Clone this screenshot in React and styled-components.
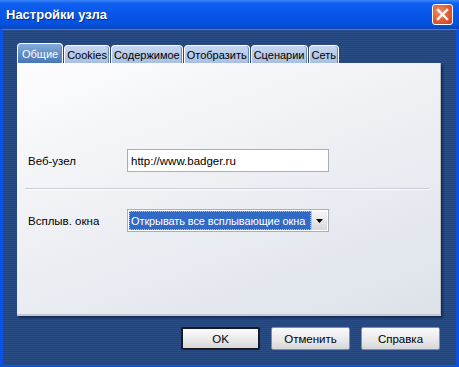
import React from "react";
import styled, { createGlobalStyle } from "styled-components";

const GlobalStyle = createGlobalStyle`
  html, body {
    margin: 0;
    padding: 0;
    background: #25467c;
  }
  * {
    box-sizing: border-box;
  }
`;

const tabs = ["Общие", "Cookies", "Содержимое", "Отобразить", "Сценарии", "Сеть"];

const App = () => {
  return (
    <>
      <GlobalStyle />
      <Window>
        <TitleBar>
          <Title>Настройки узла</Title>
          <CloseButton aria-label="close">
            <svg width="13" height="13" viewBox="0 0 13 13">
              <path d="M2 2 L11 11 M11 2 L2 11" stroke="#fff" strokeWidth="2.4" strokeLinecap="square" />
            </svg>
          </CloseButton>
        </TitleBar>
        <Body>
          <TabStrip>
            {tabs.map((t, i) => (
              <Tab key={t} $active={i === 0}>
                {t}
              </Tab>
            ))}
          </TabStrip>
          <Panel>
            <FieldRow>
              <Label>Веб-узел</Label>
              <TextInput>http://www.badger.ru</TextInput>
            </FieldRow>
            <Separator />
            <FieldRow>
              <Label>Всплыв. окна</Label>
              <Select>
                <SelectValue>Открывать все всплывающие окна</SelectValue>
                <SelectArrow>
                  <svg width="7" height="4" viewBox="0 0 7 4">
                    <path d="M0 0 H7 L3.5 4 Z" fill="#000" />
                  </svg>
                </SelectArrow>
              </Select>
            </FieldRow>
          </Panel>
          <ButtonRow>
            <Button $default>OK</Button>
            <Button>Отменить</Button>
            <Button>Справка</Button>
          </ButtonRow>
        </Body>
      </Window>
    </>
  );
};

const Window = styled.div`
  width: 459px;
  height: 367px;
  display: flex;
  flex-direction: column;
  font-family: "Liberation Sans", Arial, sans-serif;
  font-size: 11px;
  color: #000;
`;

const TitleBar = styled.div`
  height: 29px;
  flex: none;
  display: flex;
  align-items: center;
  justify-content: space-between;
  padding: 0 6px 0 6px;
  background: linear-gradient(
    #3a86fa 0%,
    #0e5ff0 12%,
    #0756e8 50%,
    #0450dc 85%,
    #0a46b8 100%
  );
`;

const Title = styled.span`
  color: #fff;
  font-weight: bold;
  font-size: 13px;
  text-shadow: 1px 1px 0 #0a2a80;
`;

const CloseButton = styled.div`
  width: 21px;
  height: 21px;
  display: flex;
  align-items: center;
  justify-content: center;
  border: 1px solid #fff;
  border-radius: 3px;
  background: radial-gradient(circle at 35% 35%, #f08a6a 0%, #e05a34 55%, #c8401e 100%);
`;

const Body = styled.div`
  flex: 1;
  display: flex;
  flex-direction: column;
  padding: 13px 15px 15px 14px;
  border: 3px solid #0a52e6;
  border-top: 1px solid #5a78b0;
  background: repeating-linear-gradient(#2a4c84 0 1px, #23457c 1px 2px);
`;

const TabStrip = styled.div`
  height: 20px;
  display: flex;
  align-items: flex-end;
  gap: 1px;
`;

const Tab = styled.div`
  height: ${(p) => (p.$active ? "20px" : "18px")};
  padding: 0 ${(p) => (p.$active ? "4px" : "2px")};
  display: flex;
  align-items: center;
  border: 1px solid #fff;
  border-bottom: none;
  border-radius: 4px 4px 0 0;
  box-shadow: inset -1px 0 0 #7088b0;
  color: ${(p) => (p.$active ? "#fff" : "#000")};
  background: ${(p) =>
    p.$active
      ? "linear-gradient(#86acdc, #5b88c4 60%, #4a78b6)"
      : "linear-gradient(#c6d6ee, #a8c0e2)"};
`;

const Panel = styled.div`
  height: 253px;
  display: flex;
  flex-direction: column;
  padding: 86px 11px 0 11px;
  background: linear-gradient(160deg, #fdfdfe 0%, #eef0f4 45%, #dde2ea 100%);
  border-right: 1px solid #b8bcc4;
  border-bottom: 2px solid #c4c8d0;
  box-shadow: 2px 2px 2px rgba(8, 20, 50, 0.55);
`;

const FieldRow = styled.div`
  display: flex;
  align-items: center;
  height: 23px;
  font-size: 11.5px;
`;

const Label = styled.span`
  width: 99px;
`;

const TextInput = styled.div`
  width: 202px;
  height: 23px;
  display: flex;
  align-items: center;
  padding: 0 3px;
  background: #fff;
  border: 1px solid #a8aebc;
  font-size: 11.5px;
`;

const Separator = styled.div`
  height: 2px;
  margin: 16px 0 19px -3px;
  width: 405px;
  border-top: 1px solid #c8ccd4;
  border-bottom: 1px solid #fff;
`;

const Select = styled.div`
  width: 202px;
  height: 23px;
  display: flex;
  padding: 1px;
  background: #fff;
  border: 1px solid #a8aebc;
`;

const SelectValue = styled.div`
  flex: 1;
  display: flex;
  align-items: center;
  padding-left: 2px;
  overflow: hidden;
  white-space: nowrap;
  color: #fff;
  font-size: 11px;
  letter-spacing: -0.1px;
  background: #316ac5;
  outline: 1px dotted #e8c060;
  outline-offset: -1px;
`;

const SelectArrow = styled.div`
  width: 16px;
  display: flex;
  align-items: center;
  justify-content: center;
  background: linear-gradient(#f6f6f6, #d8d8dc);
  border-left: 1px solid #c0c0c8;
`;

const ButtonRow = styled.div`
  display: flex;
  justify-content: flex-end;
  gap: 11px;
  margin-top: 11px;
  padding-right: 1px;
`;

const Button = styled.div`
  width: 79px;
  height: 23px;
  display: flex;
  align-items: center;
  justify-content: center;
  background: linear-gradient(#fafafa, #e8e8ea 60%, #d6d6da);
  border: ${(p) => (p.$default ? "2px solid #1a1a22" : "1px solid #8a8c94")};
  border-radius: 2px;
  font-size: 11.5px;
`;

export default App;
